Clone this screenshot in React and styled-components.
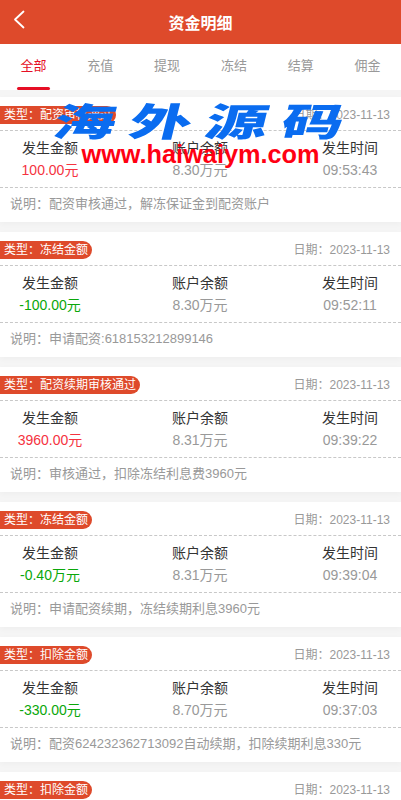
import { useState } from 'react';
import styled, { createGlobalStyle } from 'styled-components';

const tabs = ['全部', '充值', '提现', '冻结', '结算', '佣金'];

const records = [
  { type: '配资审核通过', amount: '100.00元', kind: 'in', balance: '8.30万元', time: '09:53:43', note: '配资审核通过，解冻保证金到配资账户' },
  { type: '冻结金额', amount: '-100.00元', kind: 'out', balance: '8.30万元', time: '09:52:11', note: '申请配资:618153212899146' },
  { type: '配资续期审核通过', amount: '3960.00元', kind: 'in', balance: '8.31万元', time: '09:39:22', note: '审核通过，扣除冻结利息费3960元' },
  { type: '冻结金额', amount: '-0.40万元', kind: 'out', balance: '8.31万元', time: '09:39:04', note: '申请配资续期，冻结续期利息3960元' },
  { type: '扣除金额', amount: '-330.00元', kind: 'out', balance: '8.70万元', time: '09:37:03', note: '配资624232362713092自动续期，扣除续期利息330元' },
  { type: '扣除金额', amount: '-330.00元', kind: 'out', balance: '9.03万元', time: '09:37:03', note: '配资624232362713092自动续期，扣除续期利息330元' },
];

export default function App() {
  const [active, setActive] = useState(0);

  return (
    <Page>
      <GlobalStyle />
      <Header>
        <BackButton aria-label="返回">
          <svg width="12" height="20" viewBox="0 0 12 20" fill="none">
            <path d="M10.5 1.5 L2 9.5 L10.5 17.5" stroke="#fff" strokeWidth="1.8" strokeLinecap="round" strokeLinejoin="round" />
          </svg>
        </BackButton>
        <Title>资金明细</Title>
      </Header>
      <TabBar>
        {tabs.map((tab, i) => (
          <Tab key={tab} $active={i === active} onClick={() => setActive(i)}>
            {tab}
          </Tab>
        ))}
      </TabBar>
      <List>
        {records.map((r, i) => (
          <Card key={i}>
            <CardTop>
              <TypeTag>类型：{r.type}</TypeTag>
              <DateText>日期：2023-11-13</DateText>
            </CardTop>
            <Stats>
              <Stat>
                <StatLabel>发生金额</StatLabel>
                <StatValue $kind={r.kind}>{r.amount}</StatValue>
              </Stat>
              <Stat>
                <StatLabel>账户余额</StatLabel>
                <StatValue>{r.balance}</StatValue>
              </Stat>
              <Stat>
                <StatLabel>发生时间</StatLabel>
                <StatValue>{r.time}</StatValue>
              </Stat>
            </Stats>
            <Note>说明：{r.note}</Note>
          </Card>
        ))}
      </List>
      <Watermark>
        <BrushText>海外源码</BrushText>
        <SiteText>www.haiwaiym.com</SiteText>
      </Watermark>
    </Page>
  );
}

const GlobalStyle = createGlobalStyle`
  html, body {
    margin: 0;
    padding: 0;
    background: #f5f5f5;
  }
  * {
    box-sizing: border-box;
  }
`;

const Page = styled.div`
  position: relative;
  width: 401px;
  height: 800px;
  overflow: hidden;
  background: #f5f5f5;
  font-family: "Liberation Sans", "Noto Sans CJK SC", sans-serif;
`;

const Header = styled.header`
  position: relative;
  height: 44px;
  display: flex;
  align-items: center;
  justify-content: center;
  background: #de4a2b;
`;

const BackButton = styled.div`
  position: absolute;
  left: 13px;
  top: 10px;
  display: flex;
`;

const Title = styled.h1`
  margin: 0;
  color: #fff;
  font-size: 16px;
  font-weight: 700;
`;

const TabBar = styled.nav`
  height: 46px;
  display: grid;
  grid-template-columns: repeat(6, 1fr);
  background: #fff;
`;

const Tab = styled.div`
  position: relative;
  display: flex;
  justify-content: center;
  padding-top: 13px;
  font-size: 13px;
  line-height: 18px;
  color: ${(p) => (p.$active ? '#e60f25' : '#999')};

  &::after {
    content: '';
    display: ${(p) => (p.$active ? 'block' : 'none')};
    position: absolute;
    left: 17px;
    right: 17px;
    bottom: 0;
    height: 3px;
    border-radius: 2px;
    background: #e60f25;
  }
`;

const List = styled.main`
  display: flex;
  flex-direction: column;
  gap: 10px;
  padding-top: 7px;
`;

const Card = styled.article`
  height: 125px;
  flex-shrink: 0;
  background: #fff;
  box-shadow: 0 2px 6px rgba(0, 0, 0, 0.03);
`;

const CardTop = styled.div`
  height: 34px;
  display: flex;
  align-items: center;
  justify-content: space-between;
  padding: 3px 11px 0 0;
  border-bottom: 1px dashed #c8c8c8;
`;

const TypeTag = styled.span`
  height: 18px;
  padding: 0 4px;
  border-radius: 0 9px 9px 0;
  background: #de4a2b;
  color: #fff;
  font-size: 12px;
  line-height: 18px;
`;

const DateText = styled.span`
  padding-bottom: 3px;
  color: #999;
  font-size: 12px;
`;

const Stats = styled.div`
  height: 57px;
  display: flex;
  justify-content: space-between;
  padding: 6px 1px 0 0;
  border-bottom: 1px dashed #c8c8c8;
`;

const Stat = styled.div`
  width: 100px;
  display: flex;
  flex-direction: column;
  align-items: center;
`;

const StatLabel = styled.span`
  color: #333;
  font-size: 14px;
  line-height: 22px;
`;

const StatValue = styled.span`
  color: ${(p) => (p.$kind === 'in' ? '#f5333f' : p.$kind === 'out' ? '#0aa70a' : '#999')};
  font-size: 14px;
  line-height: 22px;
`;

const Note = styled.p`
  margin: 0;
  padding: 6px 10px 0;
  color: #999;
  font-size: 13px;
  line-height: 20px;
  white-space: nowrap;
`;

const Watermark = styled.div`
  position: absolute;
  top: 98px;
  left: 0;
  width: 401px;
  display: flex;
  flex-direction: column;
  align-items: center;
  pointer-events: none;
`;

const BrushText = styled.div`
  height: 42px;
  color: #0a6cf0;
  font-family: "Noto Sans CJK SC", sans-serif;
  font-size: 62px;
  font-weight: 900;
  line-height: 42px;
  letter-spacing: 14px;
  margin-right: -14px;
  transform: skewX(-14deg) scaleY(0.62);
  white-space: nowrap;
`;

const SiteText = styled.div`
  margin-top: 1px;
  color: #ff0012;
  font-size: 25.3px;
  font-weight: 700;
  line-height: 26px;
  white-space: nowrap;
`;
